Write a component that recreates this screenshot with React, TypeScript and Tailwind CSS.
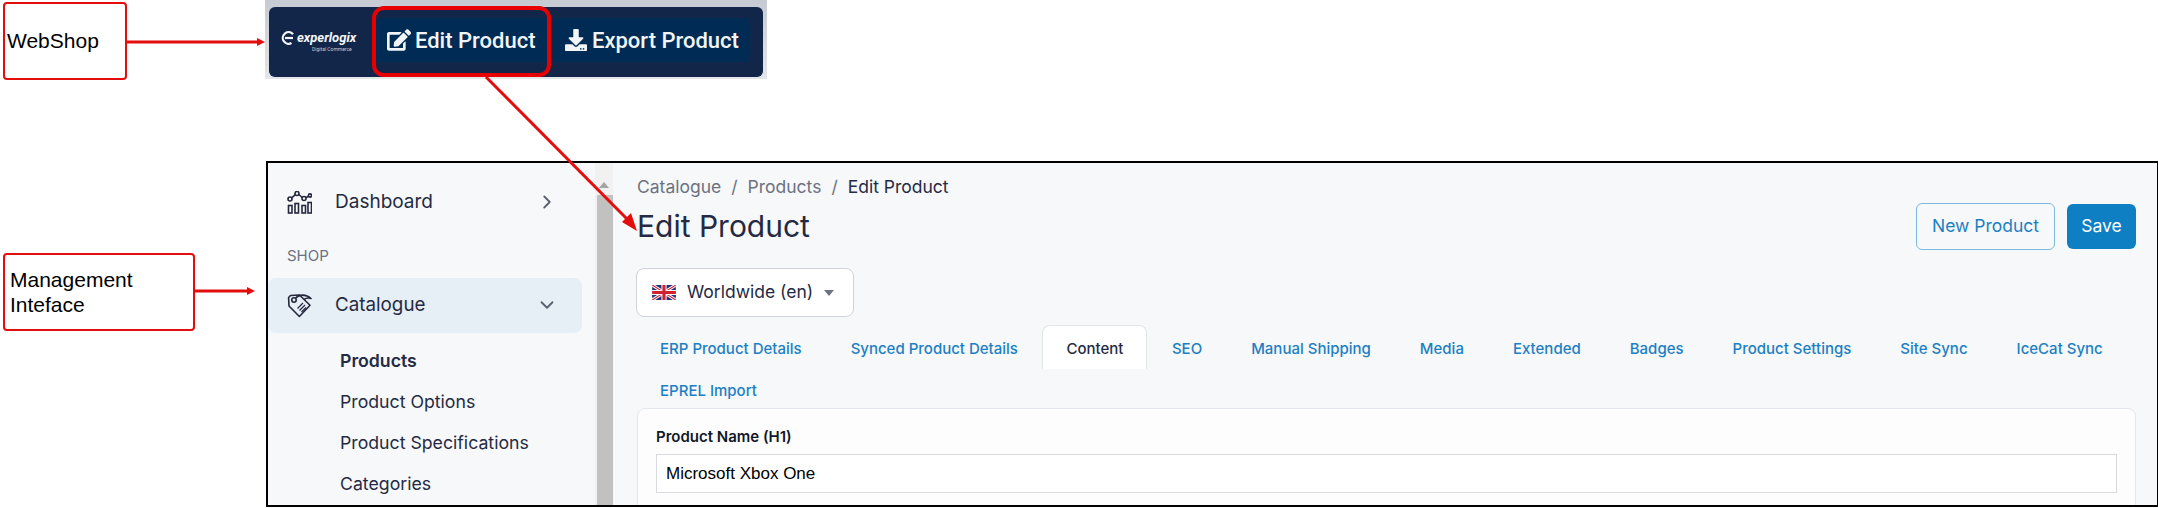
import React from 'react';
import { ChevronDown, ChevronRight } from 'lucide-react';
import { FaEdit, FaDownload } from 'react-icons/fa';

const tabs = [
  'ERP Product Details',
  'Synced Product Details',
  'Content',
  'SEO',
  'Manual Shipping',
  'Media',
  'Extended',
  'Badges',
  'Product Settings',
  'Site Sync',
  'IceCat Sync',
  'EPREL Import',
];

const subItems = ['Products', 'Product Options', 'Product Specifications', 'Categories'];

const Arrow = ({ width }: { width: number }) => (
  <svg width={width} height="12" viewBox={`0 0 ${width} 12`} className="shrink-0">
    <line x1="0" y1="6" x2={width - 6} y2="6" stroke="#e30d0d" strokeWidth="3" />
    <polygon points={`${width},6 ${width - 8},2 ${width - 8},10`} fill="#e30d0d" />
  </svg>
);

const DashboardIcon = () => (
  <svg width="25" height="23" viewBox="0 0 25 23" fill="none" stroke="#25283d" strokeWidth="1.6" className="shrink-0">
    <rect x="1.5" y="14.5" width="3.5" height="7.5" />
    <rect x="8" y="12.5" width="3.5" height="9.5" />
    <rect x="15" y="14.5" width="3.5" height="7.5" />
    <rect x="21" y="11.5" width="3.5" height="10.5" />
    <circle cx="3" cy="8" r="2" />
    <circle cx="10" cy="2.5" r="2" />
    <circle cx="17" cy="7.5" r="2" />
    <circle cx="23" cy="4.5" r="1.6" />
    <path d="M4.6 6.8 8.4 3.7M11.8 3.5 15.2 6.5M18.8 6.7 21.6 5.2" />
  </svg>
);

const TagIcon = () => (
  <svg width="25" height="25" viewBox="0 0 25 25" fill="none" stroke="#25283d" strokeWidth="1.6" strokeLinejoin="round" className="shrink-0">
    <path d="M3.5 2.5 12.5 2 23 12.2 12.4 23.5 2 13 1.6 4.5Z" />
    <circle cx="7" cy="7" r="2.2" />
    <path d="M8.5 5.2C12 1 19 1 24 5.5 21 4.5 19 5 17 6.5" />
    <path d="M10.5 15.5 16 10M12.5 17.5 18 12M14.5 19 19 14.5" strokeWidth="1.2" />
  </svg>
);

const UkFlag = () => (
  <svg width="24" height="15" viewBox="0 0 60 38" className="shrink-0">
    <rect width="60" height="38" fill="#1f2f7a" />
    <path d="M0 0 60 38M60 0 0 38" stroke="#fff" strokeWidth="8" />
    <path d="M0 0 60 38M60 0 0 38" stroke="#d3202f" strokeWidth="3" />
    <path d="M30 0V38M0 19H60" stroke="#fff" strokeWidth="13" />
    <path d="M30 0V38M0 19H60" stroke="#d3202f" strokeWidth="8" />
  </svg>
);

const Logo = () => (
  <div className="flex w-[107px] shrink-0 flex-col pl-[12px] pt-[1px]">
    <div className="flex items-center gap-[2px]">
      <svg width="14" height="14" viewBox="0 0 14 14" fill="none" stroke="#f4f6f8" strokeWidth="2.2" className="shrink-0">
        <path d="M12 3.2A5.8 5.8 0 1 0 10.5 12" />
        <path d="M4 7H12" />
      </svg>
      <span className="font-['Roboto',sans-serif] text-[13px] leading-[16px] font-bold text-[#f4f6f8] italic">experlogix</span>
    </div>
    <span className="pl-[31px] font-['Roboto',sans-serif] text-[5px] leading-[6px] whitespace-nowrap text-[#c4ccd8]">Digital Commerce</span>
  </div>
);

export default function App() {
  return (
    <div className="relative h-[508px] w-[2158px] overflow-hidden bg-white font-['Inter',sans-serif]">
      {/* top row: webshop */}
      <div className="flex h-[161px] items-start">
        <div className="mt-[2px] ml-[3px] flex h-[78px] w-[124px] items-center rounded-[4px] border-2 border-[#e30d0d] pl-[2px] font-['Liberation_Sans',sans-serif] text-[21px] text-black">
          WebShop
        </div>
        <div className="mt-[36px] flex">
          <Arrow width={138} />
        </div>
        <div className="relative h-[79px] w-[502px] bg-gradient-to-b from-[#c6cad2] to-[#e4e6ea] pt-[7px] pr-[4px] pb-[2px] pl-[4px]">
          <div className="flex h-[70px] items-center rounded-[6px] bg-[#12264a] pb-[4px]">
            <Logo />
            <div className="flex h-[44px] items-center gap-[5px] font-['Roboto',sans-serif] font-medium whitespace-nowrap text-[#f2f5f8]">
              <div className="flex h-full w-[172px] items-center gap-[4px] rounded-[4px] bg-[#002b55] pl-[11px] text-[22px]">
                <FaEdit size={24} />
                <span>Edit Product</span>
              </div>
              <div className="flex h-full w-[197px] items-center gap-[5px] rounded-[4px] bg-[#002b55] pl-[12px] text-[22px]">
                <FaDownload size={22} />
                <span>Export Product</span>
              </div>
            </div>
          </div>
          <div className="absolute top-[6px] left-[107px] h-[71px] w-[179px] rounded-[12px] border-4 border-[#e80000]" />
        </div>
      </div>

      {/* bottom row: management */}
      <div className="flex h-[347px] items-start">
        <div className="mt-[92px] ml-[3px] flex h-[78px] w-[192px] items-center rounded-[4px] border-2 border-[#e30d0d] pl-[5px] font-['Liberation_Sans',sans-serif] text-[21px] leading-[25px] text-black">
          <span>
            Management
            <br />
            Inteface
          </span>
        </div>
        <div className="mt-[124px] flex">
          <Arrow width={60} />
        </div>
        <div className="ml-[11px] flex h-[346px] min-w-0 flex-1 overflow-hidden border-2 border-r-[1px] border-black bg-[#f6f8fa]">
          {/* sidebar */}
          <div className="w-[327px] shrink-0 pt-[12px]">
            <div className="flex h-[55px] items-center pr-[37px] pb-px pl-[19px]">
              <DashboardIcon />
              <span className="ml-[23px] flex-1 text-[19px] text-[#252a43]">Dashboard</span>
              <ChevronRight size={22} color="#5b6070" />
            </div>
            <div className="flex h-[48px] items-start pt-[17px] pl-[19px] text-[15px] leading-[17px] text-[#6b7280]">SHOP</div>
            <div className="mr-[13px] flex h-[55px] items-center rounded-lg bg-[#e6eef6] pr-[24px] pb-px pl-[19px]">
              <TagIcon />
              <span className="ml-[23px] flex-1 text-[18.8px] text-[#252a43]">Catalogue</span>
              <ChevronDown size={22} color="#5b6070" />
            </div>
            <div className="pt-[8px] pl-[72px]">
              {subItems.map((item, index) => (
                <div
                  key={item}
                  className={`flex h-[41px] items-center text-[17.7px] text-[#252a43] ${index === 0 ? 'font-semibold' : ''}`}
                >
                  {item}
                </div>
              ))}
            </div>
          </div>

          {/* scrollbar */}
          <div className="flex w-[18px] shrink-0 flex-col items-center bg-[#f1f1f1] pt-[11px]">
            <div className="flex h-[21px] w-full items-center justify-center">
              <div className="h-0 w-0 border-x-[5px] border-b-[6px] border-x-transparent border-b-[#a3a3a3]" />
            </div>
            <div className="ml-[2px] w-[16px] flex-1 bg-[#c1c1c1]" />
          </div>

          {/* content */}
          <div className="min-w-0 flex-1 pt-[12px] pr-[21px] pl-[24px]">
            <div className="flex h-[24px] items-center gap-[10px] text-[17.5px] text-[#6c727f]">
              <span>Catalogue</span>
              <span>/</span>
              <span>Products</span>
              <span>/</span>
              <span className="text-[#252a43]">Edit Product</span>
            </div>
            <div className="mt-[4px] flex h-[47px] items-center justify-between">
              <h1 className="text-[30px] font-normal text-[#252a43]">Edit Product</h1>
              <div className="flex items-center gap-[12px] text-[17.5px]">
                <button className="h-[47px] w-[139px] rounded-[6px] border border-[#7db9e0] text-[#1d7fc3]">New Product</button>
                <button className="h-[45px] w-[69px] rounded-[6px] bg-[#0f7fc4] text-white">Save</button>
              </div>
            </div>
            <div className="mt-[18px] -ml-px flex h-[49px] w-[218px] items-center rounded-lg border border-[#d0d3da] bg-white pl-[15px]">
              <UkFlag />
              <span className="ml-[11px] text-[17.5px] text-[#252a43]">Worldwide (en)</span>
              <div className="ml-[11px] h-0 w-0 border-x-[5px] border-t-[6px] border-x-transparent border-t-[#6b7280]" />
            </div>
            <div className="mt-[8px] -ml-[1.5px] flex h-[83px] flex-wrap content-start items-end">
              {tabs.map((tab) =>
                tab === 'Content' ? (
                  <div
                    key={tab}
                    className="flex h-[44px] items-center rounded-t-lg border border-b-0 border-[#e3e6ea] bg-white px-[23px] pt-[3px] text-[15px] font-medium text-[#252a43]"
                  >
                    {tab}
                  </div>
                ) : (
                  <div key={tab} className="flex h-[42px] items-center px-[24.5px] pt-[2px] text-[15px] font-medium text-[#1d7fc3]">
                    {tab}
                  </div>
                ),
              )}
            </div>
            <div className="rounded-lg border border-[#e3e6ea] bg-[#fdfdfd] px-[18px] pt-[18px] pb-[20px]">
              <div className="h-[20px] text-[15px] leading-[20px] font-semibold text-[#111827]">Product Name (H1)</div>
              <div className="mt-[7px] flex h-[39px] items-center border border-[#d8dadd] bg-white pl-[9px] font-['Liberation_Sans',sans-serif] text-[17px] text-black">
                Microsoft Xbox One
              </div>
            </div>
          </div>
        </div>
      </div>

      {/* connector from the edit button to the page title */}
      <svg className="pointer-events-none absolute top-0 left-0" width="2158" height="508" viewBox="0 0 2158 508" fill="none">
        <line x1="486" y1="77" x2="632" y2="224" stroke="#e30d0d" strokeWidth="3" />
        <polygon points="637,231 622,222 631,213" fill="#e30d0d" />
      </svg>
    </div>
  );
}
